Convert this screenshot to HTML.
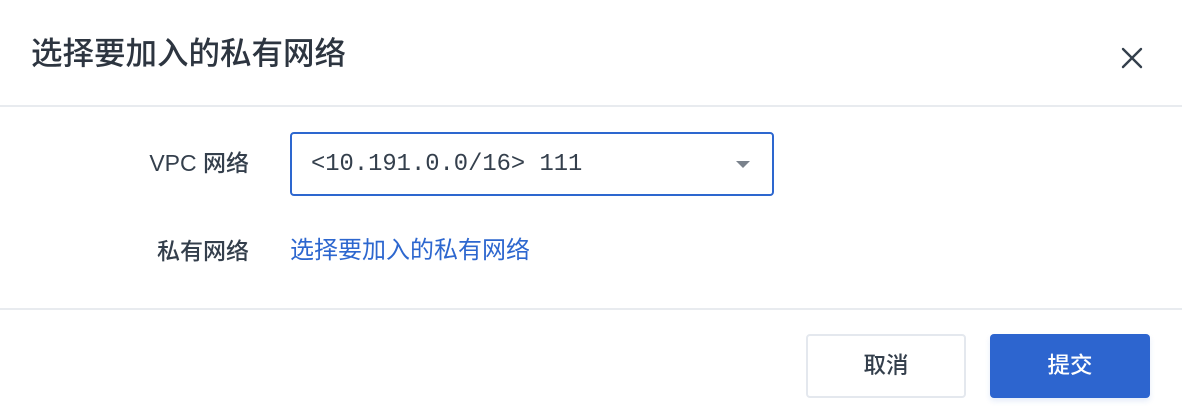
<!DOCTYPE html>
<html><head><meta charset="utf-8"><style>
*{margin:0;padding:0;box-sizing:border-box}
body{width:1182px;height:414px;background:#fff;font-family:"Liberation Sans","Noto Sans CJK SC",sans-serif;color:#343f4c;position:relative;overflow:hidden}
.title{position:absolute;left:31px;top:33px;font-size:31.5px;line-height:40px;color:#2d3540;font-weight:500}
.close{position:absolute;left:1120px;top:46px;width:24px;height:24px}
.hr{position:absolute;left:0;width:1182px;height:2px;background:#e8ebef}
.lab{position:absolute;right:933px;font-size:23px;line-height:30px;color:#343f4c;font-weight:500}
.sel{position:absolute;left:290px;top:132px;width:484px;height:64px;border:2px solid #2d67cf;border-radius:4px}
.sel span{position:absolute;left:19px;top:16px;font-family:"Liberation Mono","DejaVu Sans Mono",monospace;font-size:23.8px;line-height:30px;color:#343f4c}
.tri{position:absolute;left:444px;top:27px;width:0;height:0;border-left:7px solid transparent;border-right:7px solid transparent;border-top:7px solid #7a828c}
.link{position:absolute;left:290px;top:236px;font-size:24px;line-height:30px;color:#2d67cf}
.btn{position:absolute;top:334px;width:160px;height:64px;border-radius:4px;font-size:22.5px;line-height:60px;text-align:center;font-weight:500}
.c{left:806px;border:2px solid #e4e8ee;color:#343f4c;background:#fff}
.s{left:990px;background:#2d65cf;color:#fff;line-height:64px;box-shadow:0 3px 6px rgba(45,101,207,.12)}
</style></head><body>
<div class="title">选择要加入的私有网络</div>
<svg class="close" viewBox="0 0 24 24"><path d="M3 3L21 21M21 3L3 21" stroke="#343f4c" stroke-width="2.4" stroke-linecap="round"/></svg>
<div class="hr" style="top:105px"></div>
<div class="lab" style="top:148px">VPC 网络</div>
<div class="sel"><span>&lt;10.191.0.0/16&gt; 111</span><div class="tri"></div></div>
<div class="lab" style="top:236px">私有网络</div>
<div class="link">选择要加入的私有网络</div>
<div class="hr" style="top:308px"></div>
<div class="btn c">取消</div>
<div class="btn s">提交</div>
</body></html>
